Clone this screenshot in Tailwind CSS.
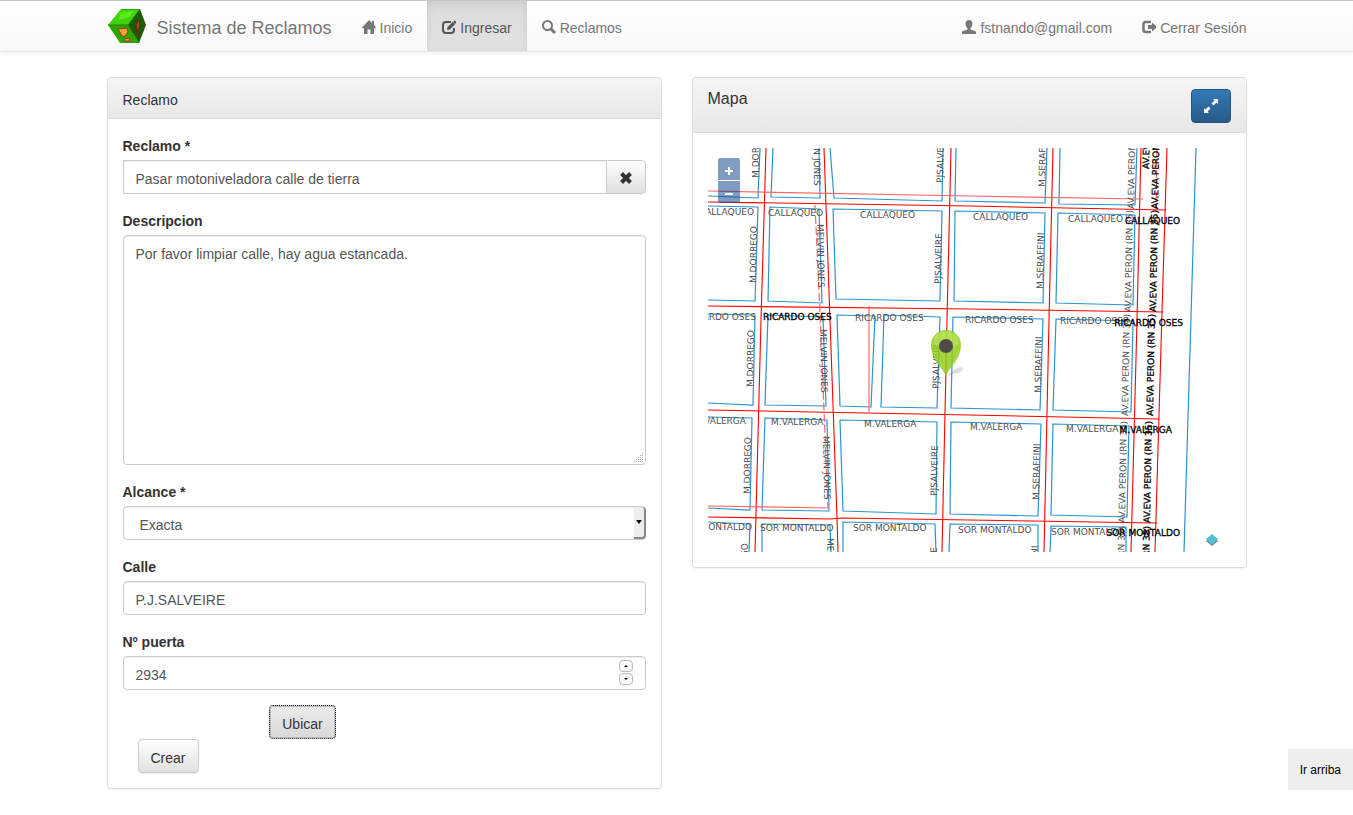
<!DOCTYPE html>
<html lang="es">
<head>
  <meta charset="utf-8">
  <meta name="viewport" content="width=device-width, initial-scale=1">
  <title>Sistema de Reclamos</title>
  <script src="https://cdn.jsdelivr.net/npm/@tailwindcss/browser@4"></script>
</head>
<body class="bg-white font-['Liberation_Sans',Arial,sans-serif] text-sm leading-5 text-[#333]">

  <!-- Navbar -->
  <nav class="border-t border-b border-t-[#c9c4c1] border-b-[#e7e7e7] bg-linear-to-b from-white to-[#f8f8f8] shadow-[0_1px_5px_rgba(0,0,0,0.075)]">
    <div class="max-w-[1170px] mx-auto px-4 flex flex-wrap items-stretch text-[#777]">
      <a href="#" class="flex items-center gap-[11px] pr-[15px] text-lg">
        <svg class="w-[38px] h-[34px]" viewBox="0 0 38 34">
          <path d="M13 0h19L20 16H0z" fill="#3fd40b"/>
          <path d="M0 16h20l11 18H12z" fill="#2fa505"/>
          <path d="M32 0l6 16-7 18-11-18z" fill="#1d5c06"/>
          <path d="M12 4l14-2-5 6-10 3z" fill="#5cec1e"/>
          <path d="M13 0h19L20 16H0M20 16l11 18" fill="none" stroke="#2a7d06"/>
          <path d="M10 20l9-1 1 4-4 5-2-1zM16 30l5-1 1 3h-5z" fill="#e8a832" stroke="#a3370c"/>
          <path d="M28 15l3-4 1 7-3 5zM29 26l2-3v3z" fill="#8c5a1c" stroke="#6b1e0a"/>
        </svg>
        <span class="pt-1">Sistema de Reclamos</span>
      </a>
      <a href="#" class="flex items-center gap-1 px-[15px] pt-[17px] pb-[13px]">
        <svg class="w-3.5 h-3.5 -mt-0.5" viewBox="0 0 14 14" fill="currentColor"><path d="M7 0l3 3V1h2v4l2 2.500-.7.800H12V14H8.500V9.500h-3V14H2V8.300H.700L0 7.500z"/></svg>
        Inicio
      </a>
      <a href="#" class="flex items-center gap-1 px-[15px] pt-[17px] pb-[13px] text-[#555] bg-linear-to-b from-[#dbdbdb] to-[#e2e2e2] shadow-[inset_0_3px_9px_rgba(0,0,0,0.075)]">
        <svg class="w-3.5 h-3.5 -mt-0.5" viewBox="0 0 14 14" fill="none" stroke="currentColor"><path d="M9 2H4a3 3 0 0 0-3 3v5a3 3 0 0 0 3 3h5a3 3 0 0 0 3-3V8" stroke-width="2"/><path d="M5 10l.600-3L11 1.800l2.200 2.200L8 9.400z" fill="currentColor" stroke="none"/><path d="M12 1l2 2" stroke-width="2"/></svg>
        Ingresar
      </a>
      <a href="#" class="flex items-center gap-1 px-[15px] pt-[17px] pb-[13px]">
        <svg class="w-3.5 h-3.5 -mt-0.5" viewBox="0 0 14 14" fill="none" stroke="currentColor"><circle cx="5.500" cy="5.500" r="4.500" stroke-width="2"/><path d="M9 9l4 4" stroke-width="3"/></svg>
        Reclamos
      </a>
      <div class="flex ml-auto -mr-4">
        <a href="#" class="flex items-center gap-1 px-[15px] pt-[17px] pb-[13px]">
          <svg class="w-3.5 h-3.5 -mt-0.5" viewBox="0 0 14 14" fill="currentColor"><path d="M7 0C4.800 0 3.600 1.500 3.600 3.500c0 2 .6 3.500 1.900 4.700v1.300L.9 11C.200 11.400 0 12 0 12.600V14h14v-1.400c0-.6-.2-1.200-.9-1.600L8.500 9.500V8.200c1.300-1.200 1.900-2.700 1.900-4.700C10.400 1.500 9.200 0 7 0z"/></svg>
          fstnando@gmail.com
        </a>
        <a href="#" class="flex items-center gap-1 px-[15px] pt-[17px] pb-[13px]">
          <svg class="w-3.5 h-3.5 -mt-0.5" viewBox="0 0 14 14" fill="none" stroke="currentColor"><path d="M9 2H3.500A2 2 0 0 0 1.500 4v6a2 2 0 0 0 2 2H9" stroke-width="2.500"/><path d="M6 5h4V2.500L15 7l-5 4.500V9H6z" fill="currentColor" stroke="none"/></svg>
          Cerrar Sesión
        </a>
      </div>
    </div>
  </nav>

  <main class="max-w-[1170px] mx-auto px-[15px] pt-[25px] pb-6 grid grid-cols-1 md:grid-cols-2 items-start gap-[30px]">

    <!-- Formulario -->
    <section class="border border-[#ddd] rounded bg-white shadow-[0_1px_2px_rgba(0,0,0,0.05)]">
      <h2 class="px-[15px] pt-3 pb-2 border-b border-[#ddd] rounded-t bg-linear-to-b from-[#f5f5f5] to-[#e8e8e8]">Reclamo</h2>
      <form class="p-[15px] flex flex-col gap-[15px]">
        <div>
          <label for="reclamo" class="block leading-[25px] mb-px font-bold">Reclamo *</label>
          <div class="flex">
            <input id="reclamo" type="text" value="Pasar motoniveladora calle de tierra"
                   class="flex-1 min-w-0 h-[34px] px-3 pt-[3px] border border-[#ccc] rounded-l-none text-[#555] shadow-[inset_0_1px_1px_rgba(0,0,0,0.075)]">
            <button type="button" aria-label="Borrar"
                    class="w-10 h-[34px] -ml-px pt-0.5 flex items-center justify-center border border-[#ccc] rounded-r bg-linear-to-b from-white to-[#e0e0e0]">
              <svg class="w-3.5 h-3.5" viewBox="0 0 14 14" stroke="#333" stroke-width="4"><path d="M2.500 2.500l9 9M11.500 2.500l-9 9"/></svg>
            </button>
          </div>
        </div>

        <div>
          <label for="descripcion" class="block leading-[25px] mb-px font-bold">Descripcion</label>
          <div class="relative">
            <textarea id="descripcion"
                      class="block w-full h-[230px] px-3 py-2 border border-[#ccc] rounded resize-none text-[#555] shadow-[inset_0_1px_1px_rgba(0,0,0,0.075)]">Por favor limpiar calle, hay agua estancada.</textarea>
            <svg class="absolute right-0.5 bottom-0.5 w-2.5 h-2.5" viewBox="0 0 10 10" stroke="#aaa" stroke-dasharray="1 1"><path d="M8 .5h1M6 2.500h3M4 4.500h5M2 6.500h7M0 8.500h9"/></svg>
          </div>
        </div>

        <div>
          <label for="alcance" class="block leading-[25px] mb-px font-bold">Alcance *</label>
          <div class="relative">
            <select id="alcance" class="appearance-none block w-full h-[34px] px-4 pt-1 border border-[#ccc] rounded bg-white text-[#555] shadow-[inset_0_1px_1px_rgba(0,0,0,0.075)]">
              <option>Exacta</option>
            </select>
            <span class="absolute right-0 top-px bottom-px w-3 flex items-center justify-center bg-[#eee] border-r-2 border-b-2 border-[#888] rounded-r pointer-events-none">
              <svg class="w-1.5 h-1" viewBox="0 0 6 4"><path d="M0 0h6L3 4z" fill="#000"/></svg>
            </span>
          </div>
        </div>

        <div>
          <label for="calle" class="block leading-[25px] mb-px font-bold">Calle</label>
          <input id="calle" type="text" value="P.J.SALVEIRE"
                 class="block w-full h-[34px] px-3 pt-[3px] border border-[#ccc] rounded text-[#555] shadow-[inset_0_1px_1px_rgba(0,0,0,0.075)]">
        </div>

        <div>
          <label for="puerta" class="block leading-[25px] mb-px font-bold">Nº puerta</label>
          <div class="relative">
            <input id="puerta" type="number" value="2934"
                   class="block w-full h-[34px] px-3 pt-[3px] border border-[#ccc] rounded text-[#555] [appearance:textfield] shadow-[inset_0_1px_1px_rgba(0,0,0,0.075)]">
            <div class="absolute right-[13px] top-1 flex flex-col gap-px">
              <button type="button" aria-label="Subir" class="w-3.5 h-3 flex items-center justify-center border border-[#bbb] rounded bg-[#fafafa]">
                <svg class="w-1 h-0.5" viewBox="0 0 4 2"><path d="M0 2h4L2 0z"/></svg>
              </button>
              <button type="button" aria-label="Bajar" class="w-3.5 h-3 flex items-center justify-center border border-[#bbb] rounded bg-[#fafafa]">
                <svg class="w-1 h-0.5" viewBox="0 0 4 2"><path d="M0 0h4L2 2z"/></svg>
              </button>
            </div>
          </div>
        </div>

        <div>
          <div class="ml-[25%] pl-4">
            <button type="button" class="block h-[34px] px-3 pt-[3px] border border-dotted border-black rounded bg-linear-to-b from-[#ebebeb] to-[#d9d9d9] shadow-[0_0_0_1px_#bbb_inset]">Ubicar</button>
          </div>
          <div class="pl-[15px]">
            <button type="submit" class="block h-[34px] px-3 pt-[3px] border border-[#ccc] rounded bg-linear-to-b from-white to-[#e0e0e0] shadow-[0_1px_1px_rgba(0,0,0,0.075)]">Crear</button>
          </div>
        </div>
      </form>
    </section>

    <!-- Mapa -->
    <section class="border border-[#ddd] rounded bg-white shadow-[0_1px_2px_rgba(0,0,0,0.05)]">
      <div class="flex justify-between px-[15px] pt-[11px] pb-[9px] border-b border-[#ddd] rounded-t bg-linear-to-b from-[#f5f5f5] to-[#e8e8e8]">
        <h2 class="text-base leading-5">Mapa</h2>
        <button type="button" aria-label="Ampliar" class="w-10 h-[34px] flex items-center justify-center border border-[#245580] rounded bg-linear-to-b from-[#337ab7] to-[#265a88]">
          <svg class="w-3.5 h-3.5" viewBox="0 0 14 14" fill="#fff"><path d="M9 0h5v5l-1.500-1.500L9.500 6.500l-2-2 3-3zM5 14H0V9l1.500 1.500 3-3 2 2-3 3z"/></svg>
        </button>
      </div>
      <div class="p-[15px]">
        <div class="relative">
          <svg class="block w-full h-auto" viewBox="708 148 523 404" font-family="DejaVu Sans, sans-serif" font-size="9">
            <!-- manzanas -->
            <g fill="none" stroke="#2e93cc" stroke-width="1.200">
              <path d="M708 196L758 198L760 148M773 148L771 197L820 198L819 148M830 148L834 198L942 201L943 148M956 148L955 201L1045 203L1047 148M1060 148L1059 204L1135 205L1137 148"/>
              <path d="M708 206L758 207L755 301L708 300M770 207L819 209L822 303L768 301zM833 209L942 211L940 301L836 299zM955 211L1045 213L1043 303L954 301zM1058 213L1135 215L1133 305L1056 303z"/>
              <path d="M708 314L755 315L753 405L708 403M768 315L823 317L826 406L765 405zM837 315L875 316L871 407L840 406zM884 315L940 317L937 408L881 407zM953 317L1043 319L1040 410L951 408zM1056 319L1133 321L1131 412L1053 410z"/>
              <path d="M708 417L752 418L750 510L708 508M765 418L827 420L829 511L762 510zM840 420L937 422L936 514L843 511zM951 422L1041 424L1038 516L950 514zM1053 424L1129 426L1127 517L1051 515z"/>
              <path d="M708 522L750 524L749 552M762 552L762 524L830 525L831 552M843 552L843 522L935 524L936 552M949 552L950 524L1038 525L1038 552M1050 552L1051 526L1126 527L1126 552M1196 148L1184 552"/>
            </g>
            <!-- calles -->
            <g fill="none" stroke="#f00" stroke-width="1.100">
              <path d="M766 148L761 320L755 552M824 148L830 320L837 518L838 552M951 148L947 320L942 552M1053 148L1049 320L1044 552M1141 148L1137 320L1131 552M1167 148L1162 312L1155 552"/>
              <path d="M708 202L970 206L1166 210M708 306L970 309L1163 312M708 410L970 415L1159 419M708 517L830 519L842 518L970 520L1157 523"/>
            </g>
            <g fill="none" stroke="#f66" stroke-width="1.200">
              <path d="M708 191L970 196L1143 199M708 506L828 508M869 306L869 412"/>
              <path d="M815 205L820 312L828 508M1157 148L1156 215" stroke-dasharray="8 3"/>
            </g>
            <!-- nombres de calles -->
            <g fill="#505050">
              <text x="754" y="215" text-anchor="end">CALLAQUEO</text>
              <text x="768" y="216">CALLAQUEO</text>
              <text x="860" y="218">CALLAQUEO</text>
              <text x="973" y="220">CALLAQUEO</text>
              <text x="1068" y="222">CALLAQUEO</text>
              <text x="756" y="320" text-anchor="end">RICARDO OSES</text>
              <text x="855" y="321">RICARDO OSES</text>
              <text x="965" y="323">RICARDO OSES</text>
              <text x="1060" y="324">RICARDO OSES</text>
              <text x="746" y="424" text-anchor="end">M.VALERGA</text>
              <text x="771" y="425">M.VALERGA</text>
              <text x="864" y="427">M.VALERGA</text>
              <text x="970" y="430">M.VALERGA</text>
              <text x="1066" y="432">M.VALERGA</text>
              <text x="752" y="530" text-anchor="end">SOR MONTALDO</text>
              <text x="760" y="531">SOR MONTALDO</text>
              <text x="853" y="531">SOR MONTALDO</text>
              <text x="958" y="533">SOR MONTALDO</text>
              <text x="1051" y="535">SOR MONTALDO</text>

              <text transform="translate(759 178) rotate(-90)">M.DORREGO</text>
              <text transform="translate(756 283) rotate(-89)">M.DORREGO</text>
              <text transform="translate(753 387) rotate(-89)">M.DORREGO</text>
              <text transform="translate(750 494) rotate(-89)">M.DORREGO</text>
              <text transform="translate(748 600) rotate(-90)">M.DORREGO</text>

              <text transform="translate(813 122) rotate(89)">MELVIN JONES</text>
              <text transform="translate(817 224) rotate(89)">MELVIN JONES</text>
              <text transform="translate(820 329) rotate(89)">MELVIN JONES</text>
              <text transform="translate(823 436) rotate(89)">MELVIN JONES</text>
              <text transform="translate(827 538) rotate(89)">MELVIN JONES</text>

              <text transform="translate(943 183) rotate(-89)">PJSALVEIRE</text>
              <text transform="translate(941 284) rotate(-89)">PJSALVEIRE</text>
              <text transform="translate(939 389) rotate(-89)">PJSALVEIRE</text>
              <text transform="translate(937 496) rotate(-89)">PJSALVEIRE</text>
              <text transform="translate(936 598) rotate(-89)">PJSALVEIRE</text>

              <text transform="translate(1045 187) rotate(-89)">M.SERAFFINI</text>
              <text transform="translate(1043 289) rotate(-89)">M.SERAFFINI</text>
              <text transform="translate(1041 393) rotate(-89)">M.SERAFFINI</text>
              <text transform="translate(1039 500) rotate(-89)">M.SERAFFINI</text>
              <text transform="translate(1037 602) rotate(-89)">M.SERAFFINI</text>

              <text transform="translate(1134 209) rotate(-89)">AV.EVA PERON (RN 35)</text>
              <text transform="translate(1131 312) rotate(-89)">AV.EVA PERON (RN 35)</text>
              <text transform="translate(1128 416) rotate(-89)">AV.EVA PERON (RN 35)</text>
              <text transform="translate(1125 523) rotate(-89)">AV.EVA PERON (RN 35)</text>
              <text transform="translate(1123 628) rotate(-89)">AV.EVA PERON (RN 35)</text>
            </g>
            <g fill="#000" stroke="#000" stroke-width=".3">
              <text x="763" y="320">RICARDO OSES</text>
              <text x="1180" y="224" text-anchor="end">CALLAQUEO</text>
              <text x="1183" y="326" text-anchor="end">RICARDO OSES</text>
              <text x="1172" y="433" text-anchor="end">M.VALERGA</text>
              <text x="1180" y="536" text-anchor="end">SOR MONTALDO</text>
              <text transform="translate(1149 169) rotate(-89)">AV.EVA PERON</text>
              <text transform="translate(1158 209) rotate(-89)">AV.EVA PERON (RN 35)</text>
              <text transform="translate(1156 312) rotate(-89)">AV.EVA PERON (RN 35)</text>
              <text transform="translate(1153 416) rotate(-89)">AV.EVA PERON (RN 35)</text>
              <text transform="translate(1150 523) rotate(-89)">AV.EVA PERON (RN 35)</text>
              <text transform="translate(1148 628) rotate(-89)">AV.EVA PERON (RN 35)</text>
            </g>
            <!-- marcador -->
            <path d="M946 377l9-8q8-4 8 0t-10 5z" fill="#000" opacity=".12"/>
            <path d="M946 377C944 368 931 360 931 345a15 15 0 0 1 30 0C961 360 948 368 946 377z" fill="#92cd1c" opacity=".85"/>
            <path d="M933 344a13 13 0 0 1 26 0q-13 8-26 0z" fill="#c5ec6a" opacity=".5"/>
            <circle cx="946" cy="346" r="7" fill="#514a4b"/>
            <!-- capas -->
            <path d="M1206 541l6-4 6 4-6 5z" fill="#6b7d83"/>
            <path d="M1206 539l6-5 6 5-6 6z" fill="#4fc3d0"/>
          </svg>
          <div class="absolute left-2.5 top-2.5 flex flex-col gap-px">
            <button type="button" aria-label="Acercar" class="w-[22px] h-[22px] flex items-center justify-center rounded-t-xs bg-[#003c88]/50 text-white">
              <svg class="w-2 h-2 mt-1" viewBox="0 0 8 8" stroke="#fff" stroke-width="2"><path d="M4 0v8M0 4h8"/></svg>
            </button>
            <button type="button" aria-label="Alejar" class="w-[22px] h-[22px] flex items-center justify-center rounded-b-xs bg-[#003c88]/50 text-white">
              <svg class="w-2 h-2 mt-1" viewBox="0 0 8 8" stroke="#fff" stroke-width="2"><path d="M0 4h8"/></svg>
            </button>
          </div>
        </div>
      </div>
    </section>
  </main>

  <a href="#" class="fixed right-0 bottom-[25px] px-3 pt-[11px] pb-[9px] bg-[#eee] text-xs leading-[21px] text-black">Ir arriba</a>

</body>
</html>
